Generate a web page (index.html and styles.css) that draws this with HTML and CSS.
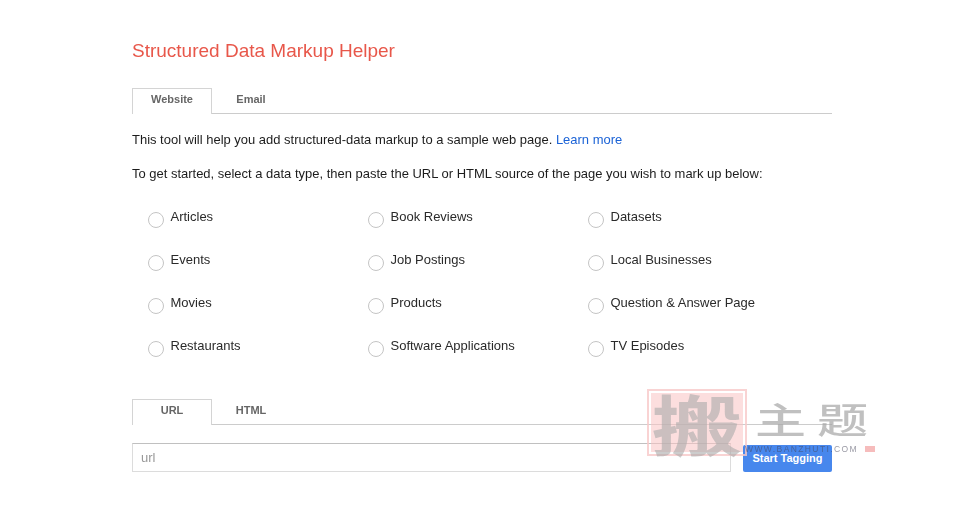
FILE: index.html
```html
<!DOCTYPE html>
<html lang="en">
<head>
<meta charset="utf-8">
<title>Structured Data Markup Helper</title>
<link rel="stylesheet" href="styles.css">
</head>
<body>
<main class="page">
  <h1 class="title">Structured Data Markup Helper</h1>
  <div class="tabs">
    <span class="tab active">Website</span>
    <span class="tab">Email</span>
  </div>
  <p class="intro">This tool will help you add structured-data markup to a sample web page. <a href="#" class="link">Learn more</a></p>
  <p class="lead">To get started, select a data type, then paste the URL or HTML source of the page you wish to mark up below:</p>
  <div class="types">
    <label class="type"><span class="radio"></span><span>Articles</span></label>
    <label class="type"><span class="radio"></span><span>Book Reviews</span></label>
    <label class="type"><span class="radio"></span><span>Datasets</span></label>
    <label class="type"><span class="radio"></span><span>Events</span></label>
    <label class="type"><span class="radio"></span><span>Job Postings</span></label>
    <label class="type"><span class="radio"></span><span>Local Businesses</span></label>
    <label class="type"><span class="radio"></span><span>Movies</span></label>
    <label class="type"><span class="radio"></span><span>Products</span></label>
    <label class="type"><span class="radio"></span><span>Question &amp; Answer Page</span></label>
    <label class="type"><span class="radio"></span><span>Restaurants</span></label>
    <label class="type"><span class="radio"></span><span>Software Applications</span></label>
    <label class="type"><span class="radio"></span><span>TV Episodes</span></label>
  </div>
  <div class="tabs tabs-source">
    <span class="tab active">URL</span>
    <span class="tab">HTML</span>
  </div>
  <div class="source">
    <input class="url" type="text" placeholder="url">
    <button class="start" type="button">Start Tagging</button>
  </div>
</main>
<div class="watermark" aria-hidden="true">
  <div class="stamp"><div class="stamp-fill"><span class="stamp-char">搬</span></div></div>
  <div class="brand">
    <div class="brand-name"><span class="brand-char">主</span><span class="brand-char">题</span></div>
    <div class="brand-url">WWW.BANZHUTI.COM<span class="brand-mark"></span></div>
  </div>
</div>
</body>
</html>
```

FILE: styles.css
```css
html, body {
  margin: 0;
  padding: 0;
  background: #fff;
}
body {
  height: 531px;
  overflow: hidden;
  position: relative;
  font-family: "Liberation Sans", Arial, sans-serif;
  font-size: 13px;
  color: #1c1c1c;
}
.page {
  width: 700px;
  margin-left: 132px;
  padding-top: 39px;
  filter: blur(0.35px);
}
.title {
  margin: 0;
  font-size: 19px;
  line-height: 24px;
  font-weight: 400;
  color: #e8574a;
}
.tabs {
  display: flex;
  margin-top: 25px;
  height: 25px;
  border-bottom: 1px solid #ccc;
}
.tab {
  box-sizing: border-box;
  width: 78px;
  height: 25px;
  border: 1px solid transparent;
  border-bottom: 0;
  text-align: center;
  font-size: 11px;
  font-weight: 700;
  line-height: 21px;
  color: #666;
}
.tab.active {
  width: 80px;
  height: 26px;
  background: #fff;
  border-color: #d4d4d4;
}
.intro {
  margin: 18px 0 0;
  line-height: 15px;
  font-size: 12.97px;
}
.lead {
  margin: 19px 0 0;
  line-height: 15px;
  font-size: 12.97px;
}
.link {
  color: #1a62d6;
  text-decoration: none;
}
.types {
  display: grid;
  grid-template-columns: repeat(3, 220px);
  grid-auto-rows: 43px;
  margin: 28px 0 0 16px;
  color: #2a2a2a;
}
.type {
  display: flex;
  gap: 6.5px;
  line-height: 15px;
}
.radio {
  box-sizing: border-box;
  flex: none;
  width: 16px;
  height: 16px;
  margin-top: 3px;
  border: 1px solid #c4c4c4;
  border-radius: 50%;
  background: #fff;
}
.tabs-source {
  margin-top: 18px;
}
.source {
  display: flex;
  gap: 12px;
  margin-top: 18px;
  align-items: flex-end;
}
.url {
  box-sizing: border-box;
  width: 599px;
  height: 29px;
  padding: 0 8px;
  border: 1px solid #dcdcdc;
  border-top-color: #c0c0c0;
  outline: 0;
  font-family: inherit;
  font-size: 13px;
  color: #333;
}
.url::placeholder {
  color: #999;
  opacity: 1;
}
.start {
  width: 89px;
  height: 27px;
  padding: 0 0 2px;
  border: 0;
  border-radius: 2px;
  background: #4787ed;
  color: #fff;
  font-family: inherit;
  font-size: 11px;
  font-weight: 700;
}
.watermark {
  position: absolute;
  left: 647px;
  top: 389px;
  display: flex;
  gap: 8px;
  pointer-events: none;
  filter: blur(0.7px);
}
.stamp {
  box-sizing: border-box;
  width: 100px;
  height: 67px;
  padding: 2px;
  border: 2px solid rgba(248, 200, 200, .8);
}
.stamp-fill {
  height: 100%;
  background: rgba(250, 195, 195, .55);
  display: flex;
  align-items: center;
  justify-content: center;
}
.stamp-char {
  display: block;
  font-family: "Noto Sans CJK SC", sans-serif;
  font-size: 66px;
  line-height: 59px;
  font-weight: 700;
  color: rgba(170, 170, 170, .6);
  transform: scaleX(1.38);
}
.brand {
  padding-top: 11px;
}
.brand-name {
  display: flex;
  gap: 26px;
  font-family: "Noto Sans CJK SC", sans-serif;
  font-size: 36px;
  line-height: 36px;
  font-weight: 500;
  color: rgba(165, 165, 165, .7);
}
.brand-char {
  display: block;
  width: 36px;
  transform: scaleX(1.42);
  transform-origin: left center;
}
.brand-url {
  display: flex;
  align-items: center;
  gap: 7px;
  margin-left: -10px;
  margin-top: 9px;
  font-size: 8.5px;
  line-height: 8px;
  letter-spacing: 1.4px;
  color: rgba(70, 70, 90, .55);
}
.brand-mark {
  width: 10px;
  height: 6px;
  background: #f6bcbc;
}
```
